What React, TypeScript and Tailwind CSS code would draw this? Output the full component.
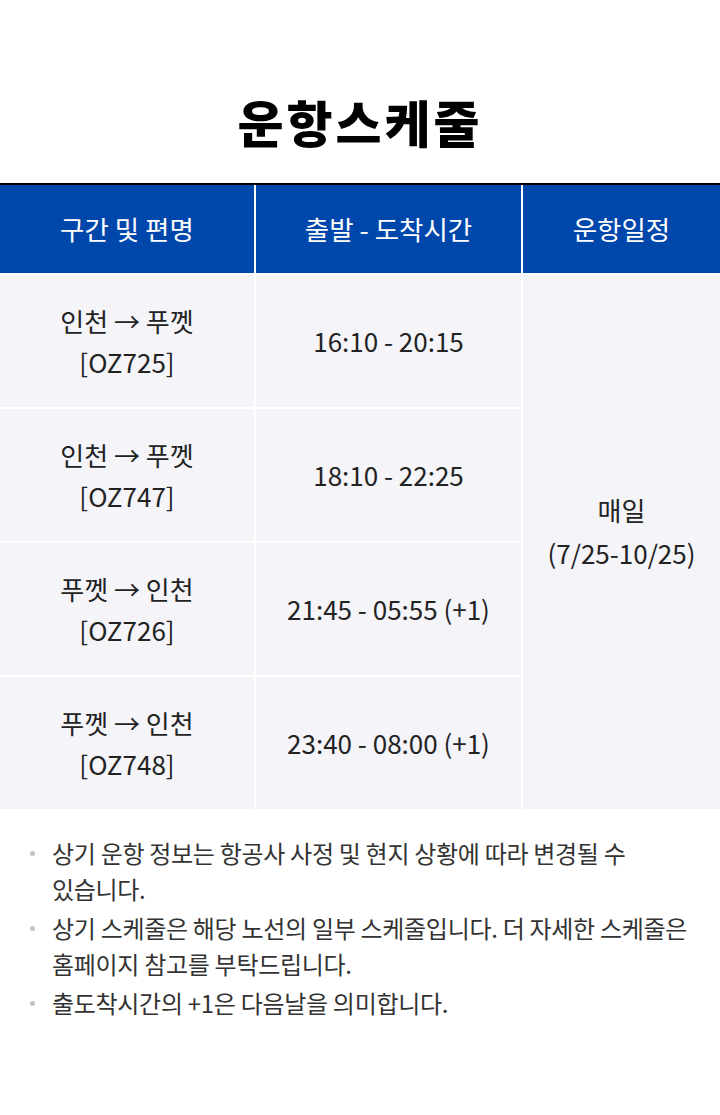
import React from "react";

const font = { fontFamily: '"Noto Sans CJK KR", "Noto Sans", sans-serif' };

const rows = [
  { route: "인천 → 푸껫", code: "[OZ725]", time: "16:10 - 20:15" },
  { route: "인천 → 푸껫", code: "[OZ747]", time: "18:10 - 22:25" },
  { route: "푸껫 → 인천", code: "[OZ726]", time: "21:45 - 05:55 (+1)" },
  { route: "푸껫 → 인천", code: "[OZ748]", time: "23:40 - 08:00 (+1)" },
];

const notes = [
  "상기 운항 정보는 항공사 사정 및 현지 상황에 따라 변경될 수 있습니다.",
  "상기 스케줄은 해당 노선의 일부 스케줄입니다. 더 자세한 스케줄은 홈페이지 참고를 부탁드립니다.",
  "출도착시간의 +1은 다음날을 의미합니다.",
];

export default function App() {
  return (
    <div className="w-[720px] h-[1115px] bg-white text-[#222]" style={font}>
      <div className="pt-[93px] pb-[34px] text-center">
        <h1 className="text-[50px] leading-[56px] font-black tracking-[3px] text-black">운항스케줄</h1>
      </div>
      <div className="border-t-[2px] border-black">
        <div className="grid grid-cols-[254px_265px_197px] gap-x-[2px] gap-y-[2px] bg-white">
          <div className="h-[88px] bg-[#0047ab] text-white text-[26.5px] flex items-center justify-center">구간 및 편명</div>
          <div className="h-[88px] bg-[#0047ab] text-white text-[26.5px] flex items-center justify-center">출발 - 도착시간</div>
          <div className="h-[88px] bg-[#0047ab] text-white text-[26.5px] flex items-center justify-center">운항일정</div>
          {rows.map((r, i) => (
            <React.Fragment key={i}>
              <div
                className="h-[132px] bg-[#f4f4f9] flex flex-col items-center justify-center text-[26px] leading-[41px]"
                style={{ gridColumn: 1, gridRow: i + 2 }}
              >
                <div>{r.route}</div>
                <div>{r.code}</div>
              </div>
              <div
                className="h-[132px] bg-[#f4f4f9] flex items-center justify-center text-[26px] pb-[2px]"
                style={{ gridColumn: 2, gridRow: i + 2 }}
              >
                {r.time}
              </div>
            </React.Fragment>
          ))}
          <div className="col-start-3 row-start-2 row-span-4 bg-[#f4f4f9] flex flex-col items-center justify-center text-[26px] leading-[43px] pb-[22px]">
            <div>매일</div>
            <div>(7/25-10/25)</div>
          </div>
        </div>
      </div>
      <ul className="pt-[26px] pl-[52px] pr-[20px] text-[24px] leading-[36px] text-[#333] tracking-[-0.3px] break-keep">
        {notes.map((n, i) => (
          <li key={i} className="relative mb-[3px]">
            <span className="absolute left-[-22px] top-[16px] w-[5px] h-[5px] rounded-full bg-[#c4c4c4]" />
            {n}
          </li>
        ))}
      </ul>
    </div>
  );
}
